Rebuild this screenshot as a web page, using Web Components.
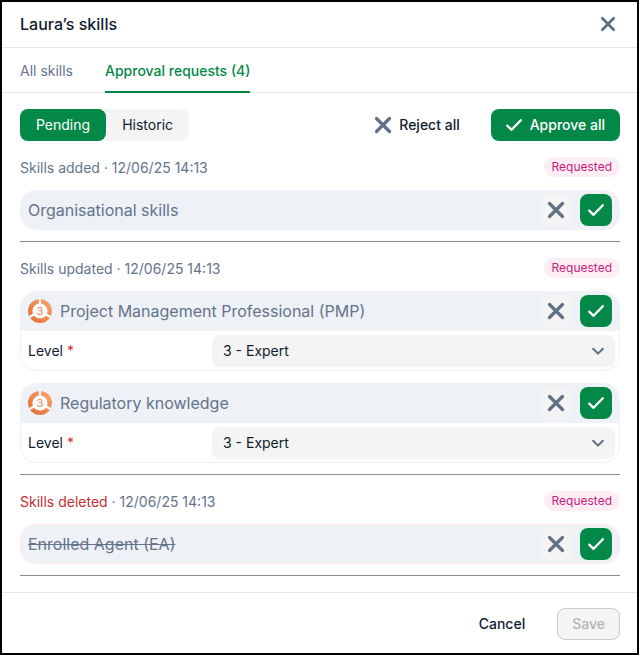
<!DOCTYPE html>
<html lang="en">
<head>
<meta charset="utf-8">
<meta name="viewport" content="width=device-width, initial-scale=1">
<title>Laura’s skills</title>
<style>
  body {
    margin: 0;
    font-family: Inter, "Liberation Sans", sans-serif;
    font-size: 14px;
    line-height: 20px;
    color: #0f1c2e;
    --green: #048848;
    --slate: #64748b;
    --icon: #5f7087;
    --soft: #eef1f6;
    --grey: #f4f4f4;
    --rule: #e4e5e7;
  }
</style>
</head>
<body>
<skills-dialog heading="Laura’s skills">
  <tab-bar slot="tabs"></tab-bar>
  <request-toolbar></request-toolbar>
  <request-group kind="Skills added" when="12/06/25 14:13">
    <skill-card name="Organisational skills"></skill-card>
  </request-group>
  <request-group kind="Skills updated" when="12/06/25 14:13">
    <skill-card name="Project Management Professional (PMP)" level="3"></skill-card>
    <skill-card name="Regulatory knowledge" level="3"></skill-card>
  </request-group>
  <request-group kind="Skills deleted" when="12/06/25 14:13" deleted>
    <skill-card name="Enrolled Agent (EA)" deleted></skill-card>
  </request-group>
  <action-button slot="actions" variant="plain">Cancel</action-button>
  <action-button slot="actions" variant="outline" disabled>Save</action-button>
</skills-dialog>

<script>
const BASE = `
  *, *::before, *::after { box-sizing: border-box; }
  button, select { font: inherit; color: inherit; margin: 0; cursor: pointer; }
  svg { display: block; flex: none; }
`;

class BaseElement extends HTMLElement {
  connectedCallback() {
    if (this.shadowRoot) return;
    const root = this.attachShadow({ mode: "open" });
    root.innerHTML = `<style>${BASE}${this.css()}</style>${this.html()}`;
  }
  css() { return ""; }
  html() { return "<slot></slot>"; }
}

const GLYPHS = {
  close: `<path d="M1.5 1.5 14.5 14.5M14.5 1.5 1.5 14.5" stroke-width="3.2"/>`,
  check: `<path d="M1.2 8.6 5.6 12.8 14.8 3.2" stroke-width="2.3"/>`,
  chevron: `<path d="M2.5 5.5 8 11 13.5 5.5" stroke-width="2.4"/>`
};

customElements.define("ui-icon", class extends BaseElement {
  css() { return `:host { display: inline-flex; flex: none; } svg { overflow: visible; }`; }
  html() {
    const size = this.getAttribute("size") || 16;
    return `<svg width="${size}" height="${size}" viewBox="0 0 16 16" fill="none" stroke="currentColor" stroke-linecap="round" stroke-linejoin="round" aria-hidden="true">${GLYPHS[this.getAttribute("name")]}</svg>`;
  }
});

customElements.define("action-button", class extends BaseElement {
  css() {
    return `
      :host { display: inline-flex; }
      button {
        display: inline-flex; align-items: center; justify-content: center; gap: 8px;
        height: 32px; padding: 0 15px; border: 1px solid transparent; border-radius: 8px;
        background: none; font-weight: 500; line-height: 20px; white-space: nowrap;
      }
      :host([variant="primary"]) button { background: var(--green); color: #fff; }
      :host([variant="outline"]) button { background: var(--grey); border-color: #cbcbcb; color: #b3b3b3; padding: 0 14px; }
      :host([icon]) button { padding: 0 14px; }
      :host([icon="close"]) ui-icon { color: var(--icon); }
      :host([square]) button { width: 32px; padding: 0; background: var(--grey); }
      :host([square][variant="primary"]) button { background: var(--green); }
      :host([bare]) button { width: 24px; height: 24px; padding: 0; }
    `;
  }
  html() {
    const icon = this.getAttribute("icon");
    const label = this.getAttribute("label");
    return `<button type="button" ${label ? `aria-label="${label}"` : ""} ${this.hasAttribute("disabled") ? "disabled" : ""}>
      ${icon ? `<ui-icon name="${icon}" size="${this.hasAttribute("bare") ? 14 : 16}"></ui-icon>` : ""}${label ? "" : "<slot></slot>"}</button>`;
  }
});

customElements.define("skills-dialog", class extends BaseElement {
  css() {
    return `
      :host { display: flex; flex-direction: column; min-height: 100vh; border: 2px solid #000; background: #fff; box-sizing: border-box; }
      header { display: flex; align-items: center; justify-content: space-between; padding: 10px 17px 11px 18px; border-bottom: 1px solid var(--rule); }
      h1 { margin: 0; font-size: 16px; line-height: 24px; font-weight: 500; }
      main { flex: 1; padding: 16px 17px 16px 18px; display: flex; flex-direction: column; gap: 16px; }
      footer { display: flex; align-items: center; justify-content: flex-end; gap: 16px; padding: 15px 17px 13px; border-top: 1px solid var(--rule); }
    `;
  }
  html() {
    return `
      <header><h1>${this.getAttribute("heading")}</h1><action-button icon="close" label="Close" bare></action-button></header>
      <slot name="tabs"></slot>
      <main><slot></slot></main>
      <footer><slot name="actions"></slot></footer>`;
  }
});

customElements.define("tab-bar", class extends BaseElement {
  css() {
    return `
      :host { display: block; }
      nav { display: flex; gap: 32px; height: 45px; padding: 0 18px; box-shadow: inset 0 -1px 0 var(--rule); }
      a { display: flex; align-items: center; padding-top: 2px; border-bottom: 2px solid transparent; color: var(--slate); text-decoration: none; white-space: nowrap; }
      a[aria-current] { color: var(--green); border-color: var(--green); font-weight: 500; }
    `;
  }
  html() { return `<nav><a href="#all">All skills</a><a href="#requests" aria-current="page">Approval requests (4)</a></nav>`; }
});

customElements.define("request-toolbar", class extends BaseElement {
  css() {
    return `
      :host { display: flex; justify-content: space-between; }
      div { display: flex; }
      .switch { border-radius: 8px; background: var(--grey); }
      .switch button { height: 32px; padding: 0 16px; border: 0; border-radius: 8px; background: none; }
      .switch button[aria-pressed="true"] { background: var(--green); color: #fff; }
      .all { gap: 16px; }
    `;
  }
  html() {
    return `
      <div class="switch"><button type="button" aria-pressed="true">Pending</button><button type="button" aria-pressed="false">Historic</button></div>
      <div class="all"><action-button icon="close">Reject all</action-button><action-button icon="check" variant="primary">Approve all</action-button></div>`;
  }
});

customElements.define("request-group", class extends BaseElement {
  css() {
    return `
      :host { display: flex; flex-direction: column; gap: 12px; padding-bottom: 11px; border-bottom: 1px solid #868e9c; }
      .top { display: flex; justify-content: space-between; align-items: flex-start; height: 21px; }
      h2 { margin: 0; font-size: 14px; line-height: 22px; font-weight: 400; color: var(--slate); }
      :host([deleted]) .kind { color: #c22f33; }
      .badge { padding: 0 8px; border-radius: 10px; background: #ffedf4; color: #c81e82; font-size: 12px; line-height: 20px; }
    `;
  }
  html() {
    return `
      <div class="top"><h2><span class="kind">${this.getAttribute("kind")}</span> · ${this.getAttribute("when")}</h2><span class="badge">Requested</span></div>
      <slot></slot>`;
  }
});

customElements.define("level-badge", class extends BaseElement {
  css() { return `:host { display: inline-flex; flex: none; }`; }
  html() {
    return `<svg width="24" height="24" viewBox="0 0 24 24" aria-hidden="true">
      <defs><linearGradient id="g" x1="1" y1="0" x2="0" y2="1"><stop offset="0" stop-color="#faa878"/><stop offset="1" stop-color="#e46a2c"/></linearGradient></defs>
      <circle cx="12" cy="12" r="12" fill="url(#g)"/>
      <circle cx="12" cy="12" r="7.6" fill="#fff"/>
      <path d="M12 12V0M12 12 1.6 18M12 12 22.4 18" stroke="#fff" stroke-width="2.2"/>
      <text x="12" y="16" text-anchor="middle" font-size="11" font-weight="500" fill="#f0935c">${this.getAttribute("value")}</text>
    </svg>`;
  }
});

customElements.define("skill-card", class extends BaseElement {
  css() {
    return `
      :host { display: block; border: 1px solid var(--soft); border-radius: 16px; overflow: hidden; }
      :host([deleted]) { border-color: #ffe9ec; }
      .head { display: flex; align-items: center; gap: 8px; padding: 3px 7px; background: var(--soft); color: var(--slate); }
      :host([level]) .head { padding-bottom: 4px; }
      h3 { flex: 1; min-width: 0; margin: 0; font-size: 16px; line-height: 24px; font-weight: 400; }
      :host([deleted]) h3 { text-decoration: line-through; }
      .field { display: grid; grid-template-columns: 184px 1fr; align-items: center; padding: 4px 4px 3px 7px; }
      .field label b { color: #d92d2d; font-weight: 400; }
      .pick { display: grid; align-items: center; }
      .pick > * { grid-area: 1 / 1; }
      .pick ui-icon { justify-self: end; margin-right: 10px; color: var(--icon); pointer-events: none; }
      select { appearance: none; width: 100%; height: 32px; padding: 0 32px 0 11px; border: 0; border-radius: 8px; background: var(--grey); }
    `;
  }
  html() {
    const level = this.getAttribute("level");
    return `
      <div class="head">${level ? `<level-badge value="${level}"></level-badge>` : ""}<h3>${this.getAttribute("name")}</h3>
        <action-button square icon="close" label="Reject"></action-button>
        <action-button square icon="check" variant="primary" label="Approve"></action-button></div>
      ${level ? `<div class="field"><label for="level">Level <b>*</b></label>
        <div class="pick"><select id="level" required><option>3 - Expert</option></select><ui-icon name="chevron" size="14"></ui-icon></div></div>` : ""}`;
  }
});
</script>
</body>
</html>
